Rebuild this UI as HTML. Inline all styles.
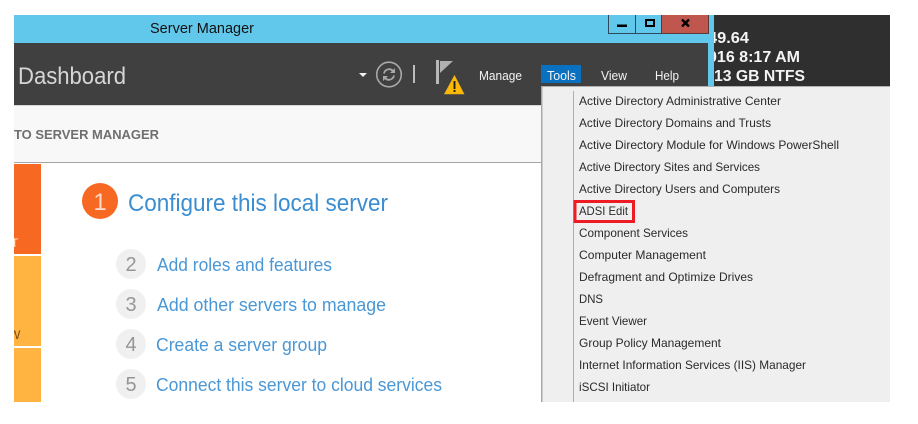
<!DOCTYPE html>
<html><head><meta charset="utf-8"><style>
html,body{margin:0;padding:0;background:#fff;width:918px;height:424px;overflow:hidden}
svg{display:block}
text{font-family:"Liberation Sans",sans-serif}
.m{font-size:12px;fill:#2a2a2a}
.b{font-size:18px;fill:#4a97d6}
.n{font-size:20px;fill:#969696;text-anchor:middle}
.t{font-size:12.5px;fill:#f4f4f4}
.r{font-size:16px;font-weight:bold;fill:#f4f4f4}
</style></head><body>
<svg width="918" height="424" viewBox="0 0 918 424" xmlns="http://www.w3.org/2000/svg">
<defs>
<clipPath id="c"><rect x="714" y="15" width="176" height="71"/></clipPath>
<clipPath id="s"><rect x="14" y="164" width="27" height="238"/></clipPath>
</defs>
<rect x="14" y="15" width="700" height="28" fill="#62c8eb"/>
<rect x="708" y="43" width="6" height="43" fill="#62c8eb"/>
<rect x="14" y="43" width="694" height="62" fill="#404040"/>
<rect x="714" y="15" width="176" height="71" fill="#2f2f2f"/>
<rect x="14" y="106" width="528" height="56" fill="#f8f8f8"/>
<rect x="14" y="105" width="528" height="1" fill="#d8d8d8"/>
<rect x="14" y="162" width="528" height="1" fill="#a5a5a5"/>

<text x="150" y="33" font-size="14.5" fill="#111" textLength="104" lengthAdjust="spacingAndGlyphs">Server Manager</text>
<text x="18" y="84" font-size="24" fill="#d6d6d6" textLength="108" lengthAdjust="spacingAndGlyphs">Dashboard</text>
<text x="14" y="139" font-size="13" font-weight="bold" fill="#6f6f6f" textLength="145" lengthAdjust="spacingAndGlyphs">TO SERVER MANAGER</text>

<!-- window buttons -->
<rect x="608.5" y="14" width="27" height="19.5" fill="#62c8eb" stroke="#2c4a5c"/>
<rect x="635.5" y="14" width="26" height="19.5" fill="#62c8eb" stroke="#2c4a5c"/>
<rect x="661.5" y="14" width="47" height="19.5" fill="#c0574f" stroke="#5a3a3a"/>
<rect x="14" y="0" width="904" height="15" fill="#fff"/>
<rect x="617" y="24.5" width="10" height="2.5" fill="#000"/>
<rect x="646" y="20" width="8" height="6" fill="none" stroke="#000" stroke-width="2"/>
<path d="M682 19.5l7 7M689 19.5l-7 7" stroke="#000" stroke-width="2.4" fill="none"/>

<!-- toolbar icons -->
<path d="M359 73h8l-4 4z" fill="#f2f2f2"/>
<circle cx="389" cy="74.500" r="12.300" fill="none" stroke="#a8a8a8" stroke-width="1.600"/>
<path d="M384 73.500a5.200 5.200 0 0 1 9-2.500M394 75.500a5.200 5.200 0 0 1-9 2.500" fill="none" stroke="#a8a8a8" stroke-width="1.800"/>
<path d="M395 68v5h-5zM383 81v-5h5z" fill="#a8a8a8"/>
<rect x="413" y="65" width="2" height="18" fill="#bcbcbc"/>
<rect x="436" y="60" width="3" height="24" fill="#b8b8b8"/>
<path d="M440 61h13l-13 12z" fill="#b0b0b0"/>
<path d="M454.500 75.500l9.500 18.500h-19.500z" fill="#ffb900" stroke="#e8ad20" stroke-width="0.600"/>
<rect x="453.500" y="81" width="2" height="8" fill="#222"/>
<rect x="453.500" y="90" width="2" height="2" fill="#222"/>

<!-- menu bar -->
<rect x="541" y="65" width="40" height="18" fill="#0a70c0"/>
<text class="t" x="479" y="80" textLength="43" lengthAdjust="spacingAndGlyphs">Manage</text>
<text class="t" x="547" y="80" textLength="29" lengthAdjust="spacingAndGlyphs">Tools</text>
<text class="t" x="601" y="80" textLength="26" lengthAdjust="spacingAndGlyphs">View</text>
<text class="t" x="655" y="80" textLength="24" lengthAdjust="spacingAndGlyphs">Help</text>

<!-- right console text -->
<g clip-path="url(#c)">
<text class="r" x="708" y="43" textLength="41" lengthAdjust="spacingAndGlyphs">49.64</text>
<text class="r" x="708" y="62" textLength="92" lengthAdjust="spacingAndGlyphs">016 8:17 AM</text>
<text class="r" x="714" y="81" textLength="91" lengthAdjust="spacingAndGlyphs">13 GB NTFS</text>
</g>

<!-- sidebar -->
<rect x="14" y="164" width="27" height="90" fill="#f76823"/>
<rect x="14" y="256" width="27" height="90" fill="#ffb341"/>
<rect x="14" y="348" width="27" height="54" fill="#ffb341"/>
<g clip-path="url(#s)">
<text x="11" y="247" font-size="12" fill="#ffe9c8">T</text>
<text x="9" y="339" font-size="12" fill="#7a4a10">W</text>
</g>

<!-- main -->
<circle cx="100" cy="201" r="18" fill="#f76823"/>
<text x="100" y="210" font-size="24" fill="#ffd9cc" text-anchor="middle">1</text>
<text x="128" y="211" font-size="24" fill="#3a8dd0" textLength="260" lengthAdjust="spacingAndGlyphs">Configure this local server</text>
<circle cx="131" cy="264" r="15" fill="#f0f0f0"/>
<circle cx="131" cy="304" r="15" fill="#f0f0f0"/>
<circle cx="131" cy="344" r="15" fill="#f0f0f0"/>
<circle cx="131" cy="384" r="15" fill="#f0f0f0"/>
<text class="n" x="131" y="271">2</text>
<text class="n" x="131" y="311">3</text>
<text class="n" x="131" y="351">4</text>
<text class="n" x="131" y="391">5</text>
<text class="b" x="157" y="271" textLength="175" lengthAdjust="spacingAndGlyphs">Add roles and features</text>
<text class="b" x="157" y="311" textLength="229" lengthAdjust="spacingAndGlyphs">Add other servers to manage</text>
<text class="b" x="156" y="351" textLength="171" lengthAdjust="spacingAndGlyphs">Create a server group</text>
<text class="b" x="156" y="391" textLength="286" lengthAdjust="spacingAndGlyphs">Connect this server to cloud services</text>

<!-- dropdown -->
<rect x="542" y="86" width="348" height="316" fill="#efefef"/>
<rect x="541" y="86" width="349" height="1" fill="#b0b0b0"/>
<rect x="541" y="86" width="1.500" height="316" fill="#a8a8a8"/>
<rect x="573" y="91" width="1" height="311" fill="#b0b0b0"/>
<rect x="575" y="201.500" width="58.500" height="20" fill="none" stroke="#ed1c24" stroke-width="3"/>
<text class="m" x="579" y="105" textLength="202" lengthAdjust="spacingAndGlyphs">Active Directory Administrative Center</text>
<text class="m" x="579" y="127" textLength="192" lengthAdjust="spacingAndGlyphs">Active Directory Domains and Trusts</text>
<text class="m" x="579" y="149" textLength="260" lengthAdjust="spacingAndGlyphs">Active Directory Module for Windows PowerShell</text>
<text class="m" x="579" y="171" textLength="181" lengthAdjust="spacingAndGlyphs">Active Directory Sites and Services</text>
<text class="m" x="579" y="193" textLength="201" lengthAdjust="spacingAndGlyphs">Active Directory Users and Computers</text>
<text class="m" x="579" y="215" textLength="49" lengthAdjust="spacingAndGlyphs">ADSI Edit</text>
<text class="m" x="579" y="237" textLength="109" lengthAdjust="spacingAndGlyphs">Component Services</text>
<text class="m" x="579" y="259" textLength="127" lengthAdjust="spacingAndGlyphs">Computer Management</text>
<text class="m" x="579" y="281" textLength="174" lengthAdjust="spacingAndGlyphs">Defragment and Optimize Drives</text>
<text class="m" x="579" y="303" textLength="24" lengthAdjust="spacingAndGlyphs">DNS</text>
<text class="m" x="579" y="325" textLength="68" lengthAdjust="spacingAndGlyphs">Event Viewer</text>
<text class="m" x="579" y="347" textLength="142" lengthAdjust="spacingAndGlyphs">Group Policy Management</text>
<text class="m" x="579" y="369" textLength="227" lengthAdjust="spacingAndGlyphs">Internet Information Services (IIS) Manager</text>
<text class="m" x="579" y="391" textLength="71" lengthAdjust="spacingAndGlyphs">iSCSI Initiator</text>
</svg>
</body></html>
